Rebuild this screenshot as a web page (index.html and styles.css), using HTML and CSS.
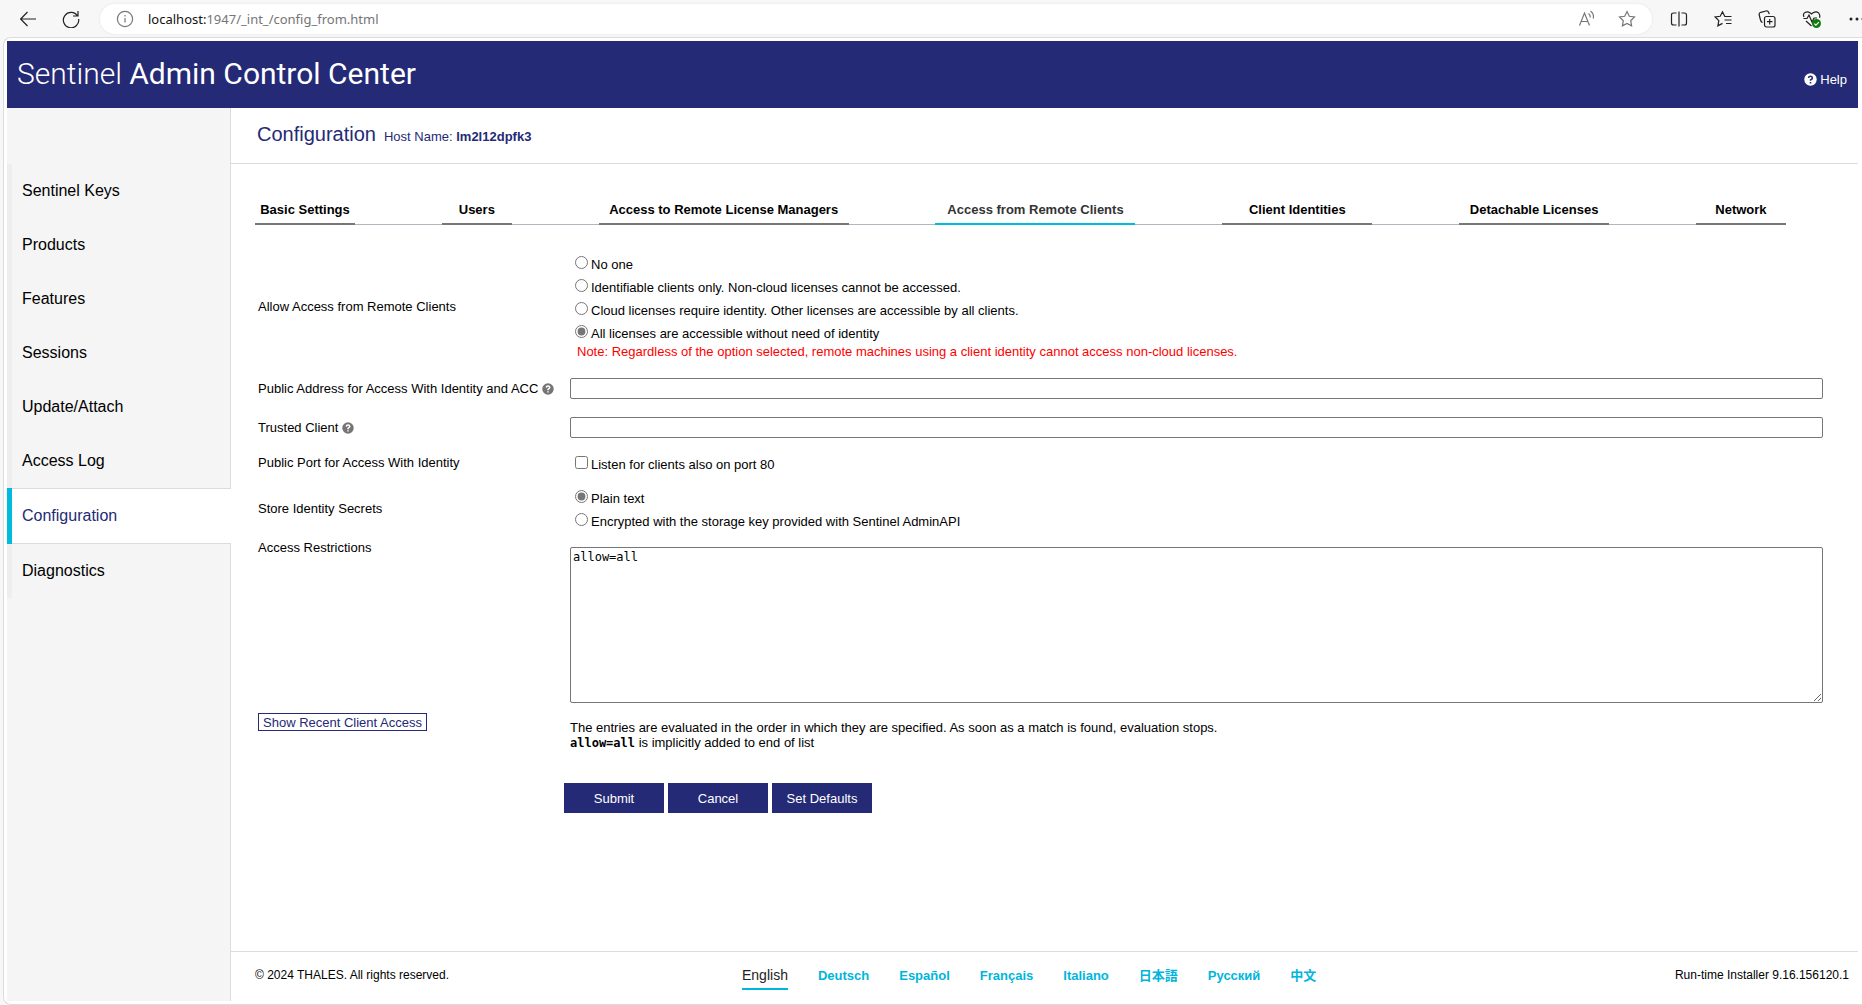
FILE: index.html
```html
<!DOCTYPE html>
<html lang="en">
<head>
<meta charset="utf-8">
<title>Sentinel Admin Control Center</title>
<link rel="stylesheet" href="styles.css">
</head>
<body>
<div class="toolbar">
  <button class="tool" type="button" aria-label="Back"><svg width="16" height="16" viewBox="0 0 16 16"><path d="M16 8H.8M7.500 1L.6 8l6.900 7"/></svg></button>
  <button class="tool" type="button" aria-label="Refresh"><svg width="18" height="18" viewBox="0 0 18 18"><path d="M15.600 6A7.700 7.700 0 1 0 16.700 9M16 1v5h-5"/></svg></button>
  <div class="address">
    <svg class="grey" width="18" height="18" viewBox="0 0 18 18"><circle cx="9" cy="9" r="7.600"/><path d="M9 8v4.500M9 5v1.500"/></svg>
    <span class="url"><span class="host">localhost:</span>1947/_int_/config_from.html</span>
    <button class="tool grey" type="button" aria-label="Read aloud"><svg width="18" height="18" viewBox="0 0 18 18"><path d="M1.500 15.500L6.500 3l5 12.500M3.200 11.500h6.600M10.500 3.500q2 1.500 1.800 4M12.500 1q3.800 3 2.800 7.500"/></svg></button>
    <button class="tool grey" type="button" aria-label="Add to favorites"><svg width="18" height="18" viewBox="0 0 18 18"><path d="M9 1.600l2.300 4.700 5.200.7-3.800 3.700.9 5.200L9 13.400l-4.600 2.500.9-5.200L1.500 7l5.200-.7z"/></svg></button>
  </div>
  <button class="tool" type="button" aria-label="Split screen"><svg width="18" height="18" viewBox="0 0 18 18"><path d="M9 1.500v15M6.500 3H3.500Q1.500 3 1.500 5v8q0 2 2 2h3M11.500 3h3q2 0 2 2v8q0 2-2 2h-3"/></svg></button>
  <button class="tool" type="button" aria-label="Favorites"><svg width="18" height="18" viewBox="0 0 18 18"><path d="M12 6.500h-1.200L8.500 1.800 6.200 6.300l-5 .7 3.600 3.700-.9 5.200 4.600-2.500M12 6.500h5.500M10.500 10h7M12 13.500h5.500"/></svg></button>
  <button class="tool" type="button" aria-label="Collections"><svg width="18" height="18" viewBox="0 0 18 18"><rect x="6.500" y="6.500" width="10.500" height="10.500" rx="2"/><path d="M11.700 9v5.500M9 11.700h5.500M4.500 12.500Q3 12 2.500 10L1.200 5Q.8 3 2.800 2.300L8 1q2-.4 2.700 1.500l.5 1.700"/></svg></button>
  <button class="tool" type="button" aria-label="Browser essentials"><svg width="20" height="18" viewBox="0 0 20 18"><path d="M2 7Q.5 4 3 2.500t5 .3L9.500 4 11 2.800q3.500-2 5.500 0t1 5M1.500 8.500H5L7 5l3 7 2-4h3M4 11l5.500 5"/><circle class="ok" cx="14.500" cy="13.500" r="4.500"/><path class="tick" d="M12.300 13.600l1.600 1.600 3-3"/></svg></button>
  <button class="tool last" type="button" aria-label="Settings and more"><svg class="dots" width="18" height="18" viewBox="0 0 18 18"><circle cx="3" cy="9" r="1.500"/><circle cx="9" cy="9" r="1.500"/><circle cx="15" cy="9" r="1.500"/></svg></button>
</div>
<div class="frame">
  <header class="banner">
    <h1 class="brand">Sentinel <strong>Admin Control Center</strong></h1>
    <a class="help" href="#help"><svg class="q" width="13" height="13" viewBox="0 0 13 13"><circle cx="6.500" cy="6.500" r="6.200"/><path d="M4.600 5Q4.700 3.300 6.500 3.300T8.400 5Q8.400 6 6.500 7v.8M6.500 8.900v1.500"/></svg>Help</a>
  </header>
  <div class="columns">
    <nav class="menu">
      <a href="#keys">Sentinel Keys</a>
      <a href="#products">Products</a>
      <a href="#features">Features</a>
      <a href="#sessions">Sessions</a>
      <a href="#update">Update/Attach</a>
      <a href="#log">Access Log</a>
      <a class="current" href="#configuration">Configuration</a>
      <a href="#diagnostics">Diagnostics</a>
    </nav>
    <div class="content">
      <div class="heading"><h2>Configuration</h2><span>Host Name: <strong>lm2l12dpfk3</strong></span></div>
      <main>
        <nav class="tabs">
          <a class="w100" href="#basic">Basic Settings</a><i></i>
          <a class="w70" href="#users">Users</a><i></i>
          <a class="w250" href="#to">Access to Remote License Managers</a><i></i>
          <a class="w200 active" href="#from">Access from Remote Clients</a><i></i>
          <a class="w150" href="#identities">Client Identities</a><i></i>
          <a class="w150" href="#detachable">Detachable Licenses</a><i></i>
          <a class="w90" href="#network">Network</a>
        </nav>
        <form class="form">
          <span class="allow" id="allow">Allow Access from Remote Clients</span>
          <div class="options" role="radiogroup" aria-labelledby="allow">
            <label><input type="radio" name="access">No one</label>
            <label><input type="radio" name="access">Identifiable clients only. Non-cloud licenses cannot be accessed.</label>
            <label><input type="radio" name="access">Cloud licenses require identity. Other licenses are accessible by all clients.</label>
            <label><input type="radio" name="access" checked>All licenses are accessible without need of identity</label>
            <p class="note">Note: Regardless of the option selected, remote machines using a client identity cannot access non-cloud licenses.</p>
          </div>
          <label class="label" for="address">Public Address for Access With Identity and ACC <svg class="q" width="12" height="12" viewBox="0 0 13 13"><circle cx="6.500" cy="6.500" r="6.200"/><path d="M4.600 5Q4.700 3.300 6.500 3.300T8.400 5Q8.400 6 6.500 7v.8M6.500 8.900v1.500"/></svg></label>
          <input class="text" type="text" id="address">
          <label class="label" for="trusted">Trusted Client <svg class="q" width="12" height="12" viewBox="0 0 13 13"><circle cx="6.500" cy="6.500" r="6.200"/><path d="M4.600 5Q4.700 3.300 6.500 3.300T8.400 5Q8.400 6 6.500 7v.8M6.500 8.900v1.500"/></svg></label>
          <input class="text" type="text" id="trusted">
          <span>Public Port for Access With Identity</span>
          <div class="options"><label><input type="checkbox">Listen for clients also on port 80</label></div>
          <span id="store">Store Identity Secrets</span>
          <div class="options secrets" role="radiogroup" aria-labelledby="store">
            <label><input type="radio" name="secrets" checked>Plain text</label>
            <label><input type="radio" name="secrets">Encrypted with the storage key provided with Sentinel AdminAPI</label>
          </div>
          <div class="side">
            <label for="rules">Access Restrictions</label>
            <button class="recent" type="button">Show Recent Client Access</button>
          </div>
          <div class="rules">
            <textarea id="rules">allow=all</textarea>
            <p>The entries are evaluated in the order in which they are specified. As soon as a match is found, evaluation stops.<br><code>allow=all</code> is implicitly added to end of list</p>
          </div>
          <div class="actions">
            <button type="submit">Submit</button>
            <button type="button">Cancel</button>
            <button type="reset">Set Defaults</button>
          </div>
        </form>
      </main>
      <footer class="footer">
        <span>© 2024 THALES. All rights reserved.</span>
        <nav class="langs">
          <a class="on" href="#en">English</a>
          <a href="#de">Deutsch</a>
          <a href="#es">Español</a>
          <a href="#fr">Français</a>
          <a href="#it">Italiano</a>
          <a href="#ja" lang="ja">日本語</a>
          <a href="#ru">Русский</a>
          <a href="#zh" lang="zh">中文</a>
        </nav>
        <span>Run-time Installer 9.16.156120.1</span>
      </footer>
    </div>
  </div>
</div>
</body>
</html>
```

FILE: styles.css
```css
* { box-sizing: border-box; }
html { height: 100%; }
body {
  margin: 0;
  min-height: 100%;
  display: flex;
  flex-direction: column;
  background: #f7f7f7;
  color: #000;
  font: 13px/15px "Liberation Sans", "Noto Sans CJK JP", sans-serif;
  overflow-x: hidden;
}
a { color: inherit; text-decoration: none; }
p, h1, h2 { margin: 0; font-weight: 400; }
button { font: inherit; border: 0; cursor: pointer; }

/* browser toolbar */
.toolbar {
  display: flex;
  align-items: center;
  height: 37px;
  padding-left: 20px;
  gap: 26px;
}
.toolbar svg { display: block; fill: none; stroke: #222; stroke-width: 1.2; }
.toolbar .grey svg, .toolbar svg.grey { stroke: #777; }
.tool { padding: 0; background: none; flex: none; }
.last { margin-right: -4px; }
.address {
  flex: 1;
  display: flex;
  align-items: center;
  gap: 14px;
  height: 30px;
  margin: 0 -8px 0 -6px;
  padding: 0 16px;
  border-radius: 15px;
  background: #fff;
  box-shadow: 0 0 3px #e4e4e4;
}
.address .tool { margin-left: 8px; }
.url { flex: 1; font: 13px/18px "Noto Sans", sans-serif; color: #757575; }
.host { color: #111; }
.toolbar .dots { fill: #222; stroke: none; }
.toolbar .ok { fill: #107c10; stroke: none; }
.toolbar .tick { stroke: #fff; }

/* page frame */
.frame {
  flex: 1;
  display: flex;
  flex-direction: column;
  margin-left: 3px;
  padding: 3px 4px 3px 3px;
  border: solid #dcdcdc;
  border-width: 1px 0 1px 1px;
  border-radius: 8px 0 0 8px;
  background: #fff;
}
.banner {
  display: flex;
  justify-content: space-between;
  align-items: center;
  height: 67px;
  padding: 0 11px 0 10px;
  background: #242a75;
  color: #fff;
}
.brand { margin-bottom: 2px; font: 300 30px/36px Roboto, sans-serif; }
.brand strong { font-weight: 400; }
.help { display: flex; align-items: center; gap: 3px; margin-top: 10px; }
.q { fill: #fff; stroke: #242a75; stroke-width: 1.6; }
.q circle { stroke: none; }
.label .q { fill: #757575; stroke: #fff; vertical-align: -2px; }
.columns { flex: 1; display: flex; }

/* side menu */
.menu {
  width: 224px;
  padding-top: 56px;
  background: linear-gradient(#dcdcdc, #dcdcdc) right / 1px 100% no-repeat #f5f5f5;
  font-size: 16px;
}
.menu a {
  display: block;
  border-left: 5px solid #eee;
  padding: 18px 10px;
  line-height: 18px;
}
.menu .current {
  border-left-color: #00bbdc;
  background: #fff;
  color: #242a75;
  box-shadow: inset 0 1px #dcdcdc, inset 0 -1px #dcdcdc;
  padding: 19px 10px;
}

/* content */
.content { flex: 1; display: flex; flex-direction: column; min-width: 0; }
.heading {
  display: flex;
  align-items: baseline;
  gap: 8px;
  height: 56px;
  padding: 15px 26px;
  border-bottom: 1px solid #dcdcdc;
  color: #242a75;
}
.heading h2 { font-size: 20px; line-height: 22px; }
main { flex: 1; padding: 38px 35px 0 24px; }
.tabs {
  display: flex;
  margin-right: 37px;
  font-weight: 700;
  text-align: center;
}
.tabs a { border-bottom: 2px solid #777; padding-bottom: 6px; }
.tabs i { flex: 1; border-bottom: 1px solid #b0b6be; }
.tabs .active { border-color: #00bbdc; color: #333; }
.w70 { width: 70px; }
.w90 { width: 90px; }
.w100 { width: 100px; }
.w150 { width: 150px; }
.w200 { width: 200px; }
.w250 { width: 250px; }

.form {
  display: grid;
  grid-template-columns: 312px 1fr;
  row-gap: 18px;
  align-items: center;
  margin: 31px 0 0 3px;
}
.form > span { line-height: 13px; }
.form .allow { padding-bottom: 4px; }
.options {
  display: flex;
  flex-direction: column;
  align-items: flex-start;
  gap: 10px;
  padding-left: 5px;
}
.options label { display: flex; height: 13px; gap: 3px; line-height: 17px; }
.options input { margin: 0; width: 13px; height: 13px; accent-color: #767676; }
.note { margin-top: -4px; padding-left: 2px; line-height: 16px; color: #f00; }
.text { height: 21px; border: 1px solid #767676; border-radius: 2px; }
.secrets { margin: 3px 0; }
.side {
  align-self: stretch;
  display: flex;
  flex-direction: column;
  align-items: flex-start;
  gap: 158px;
  margin-top: -7px;
}
.recent { padding: 0 4px; height: 18px; background: #fff; border: 1px solid #242a75; color: #242a75; }
.rules textarea {
  display: block;
  width: 100%;
  height: 156px;
  padding: 2px;
  border: 1px solid #767676;
  border-radius: 2px;
  font: 12px/15px "DejaVu Sans Mono", monospace;
}
.rules p { padding-top: 17px; }
.rules code { font: 700 12px/15px "DejaVu Sans Mono", monospace; }
.actions { grid-column: 1 / -1; display: flex; gap: 4px; margin: 14px 0 0 306px; }
.actions button { width: 100px; height: 30px; background: #242a75; color: #fff; }

/* footer */
.footer {
  display: grid;
  grid-template-columns: 487px 1fr auto;
  height: 50px;
  padding: 16px 9px 0 24px;
  border-top: 1px solid #dcdcdc;
  font-size: 12px;
}
.langs {
  display: flex;
  align-items: flex-start;
  gap: 30px;
  font-size: 13px;
  font-weight: 700;
  color: #00b5dc;
}
.langs .on {
  padding-bottom: 5px;
  border-bottom: 2px solid #00b5dc;
  font-size: 14px;
  font-weight: 400;
  color: #222;
}
```
